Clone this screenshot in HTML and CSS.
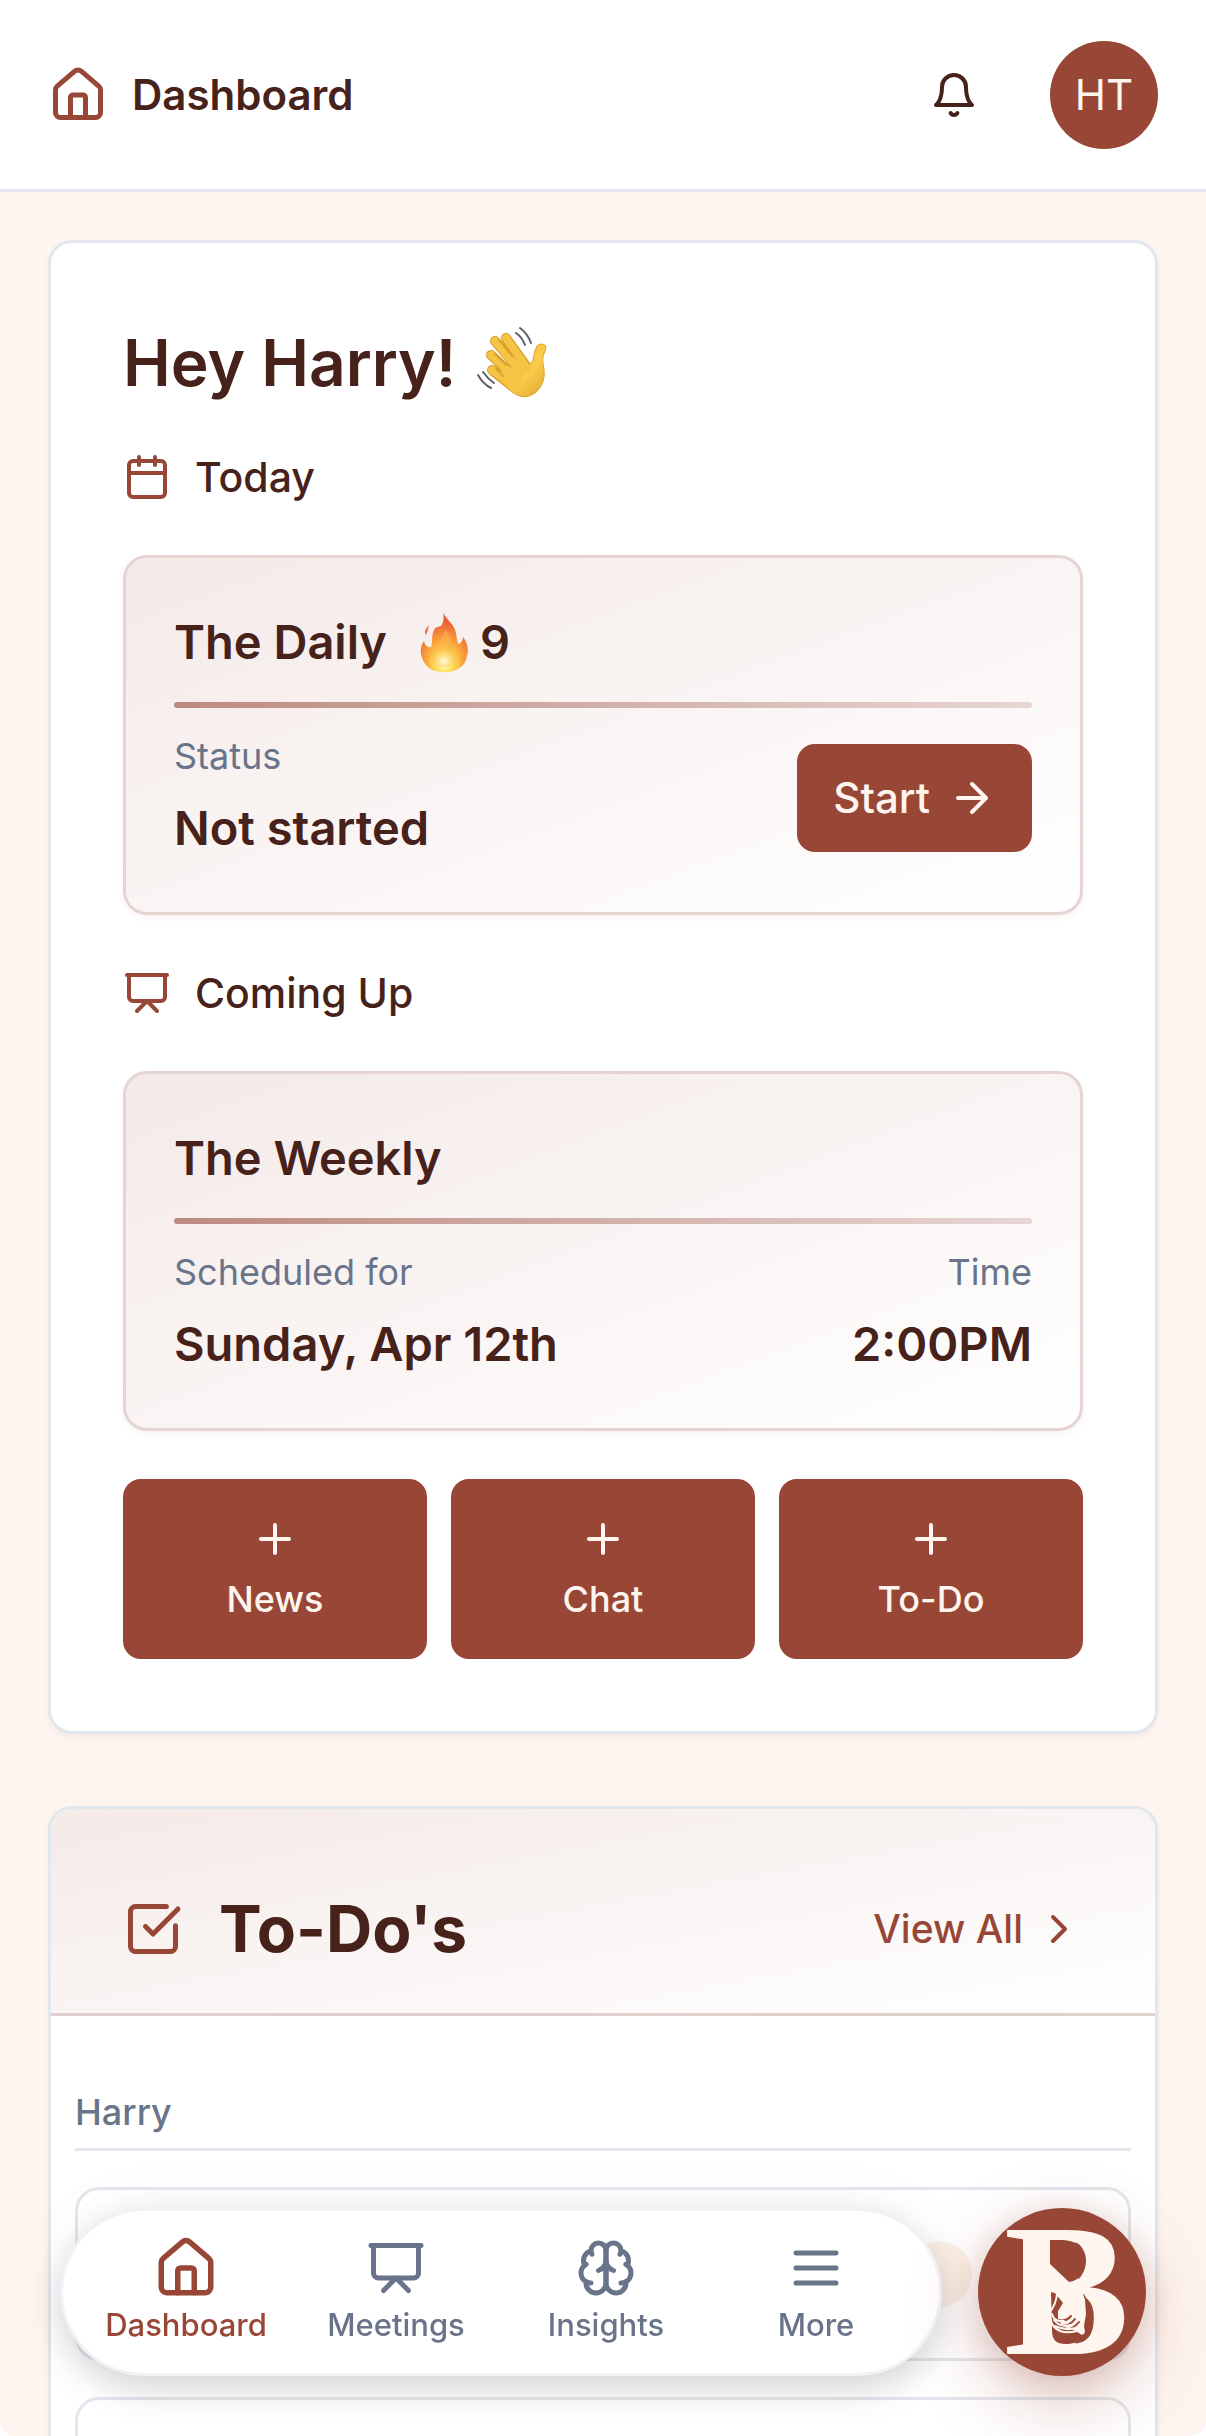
FILE: index.html
```html
<!DOCTYPE html>
<html lang="en">
  <head>
    <meta charset="utf-8" />
    <meta name="viewport" content="width=device-width" />
    <title>Dashboard</title>
    <link rel="stylesheet" href="styles.css">
  </head>
  <body>
    <!-- shared icon shapes -->
    <svg class="sprite" aria-hidden="true">
      <symbol id="i-home" viewBox="0 0 24 24">
        <path d="M15 21v-8a1 1 0 0 0-1-1h-4a1 1 0 0 0-1 1v8" />
        <path d="M3 10a2 2 0 0 1 .709-1.528l7-5.999a2 2 0 0 1 2.582 0l7 5.999A2 2 0 0 1 21 10v9a2 2 0 0 1-2 2H5a2 2 0 0 1-2-2z" />
      </symbol>
      <symbol id="i-bell" viewBox="0 0 24 24">
        <path d="M6 8a6 6 0 0 1 12 0c0 7 3 9 3 9H3s3-2 3-9" />
        <path d="M10.3 21a1.94 1.94 0 0 0 3.4 0" />
      </symbol>
      <symbol id="i-calendar" viewBox="0 0 24 24">
        <path d="M8 2v4M16 2v4M3 10h18" />
        <rect x="3" y="4" width="18" height="18" rx="2" />
      </symbol>
      <symbol id="i-board" viewBox="0 0 24 24">
        <path d="M2 3h20M21 3v11a2 2 0 0 1-2 2H5a2 2 0 0 1-2-2V3M7 21l5-5 5 5" />
      </symbol>
      <symbol id="i-arrow" viewBox="0 0 24 24">
        <path d="M5 12h14M12 5l7 7-7 7" />
      </symbol>
      <symbol id="i-plus" viewBox="0 0 24 24">
        <path d="M5 12h14M12 5v14" />
      </symbol>
      <symbol id="i-check" viewBox="0 0 24 24">
        <path d="M21 10.656V19a2 2 0 0 1-2 2H5a2 2 0 0 1-2-2V5a2 2 0 0 1 2-2h12.344" />
        <path d="m9 11 3 3L22 4" />
      </symbol>
      <symbol id="i-chevron" viewBox="0 0 24 24">
        <path d="m9 18 6-6-6-6" />
      </symbol>
      <symbol id="i-brain" viewBox="0 0 24 24">
        <path d="M12 5a3 3 0 1 0-5.997.125 4 4 0 0 0-2.526 5.77 4 4 0 0 0 .556 6.588A4 4 0 1 0 12 18Z" />
        <path d="M12 5a3 3 0 1 1 5.997.125 4 4 0 0 1 2.526 5.77 4 4 0 0 1-.556 6.588A4 4 0 1 1 12 18Z" />
        <path d="M15 13a4.5 4.5 0 0 1-3-4 4.5 4.5 0 0 1-3 4" />
        <path d="M17.599 6.5a3 3 0 0 0 .399-1.375M6.003 5.125A3 3 0 0 0 6.401 6.5M3.477 10.896a4 4 0 0 1 .585-.396M19.938 10.5a4 4 0 0 1 .585.396M6 18a4 4 0 0 1-1.967-.516M19.967 17.484A4 4 0 0 1 18 18" />
      </symbol>
      <symbol id="i-menu" viewBox="0 0 24 24">
        <path d="M4 6h16M4 12h16M4 18h16" />
      </symbol>
    </svg>

    <header class="topbar">
      <svg class="icon icon-lg accent"><use href="#i-home" /></svg>
      <span class="topbar-title">Dashboard</span>
      <button class="bell" aria-label="Notifications"><svg class="icon"><use href="#i-bell" /></svg></button>
      <button class="avatar">HT</button>
    </header>

    <main>
      <section class="card welcome">
        <h1>
          Hey Harry!
          <svg class="wave" viewBox="0 0 78 78" role="img" aria-label="waving hand">
            <defs>
              <linearGradient id="skin" x1="0" y1="0" x2="1" y2="1">
                <stop offset="0" stop-color="#f3b93c" />
                <stop offset=".6" stop-color="#f9cd4b" />
                <stop offset="1" stop-color="#e0a32e" />
              </linearGradient>
            </defs>
            <g stroke="#d99a2b" stroke-width="10" stroke-linecap="round">
              <path d="M32 14 52 42M21 17 47 47M17 31 42 54M18 46 38 62" />
            </g>
            <path fill="url(#skin)" stroke="#dfa12f" stroke-width="1" d="M32 44 49 40Q56 44 59 36Q60 27 63 22Q67 18 72 22Q72 26 69 32Q68 37 70 45Q72 60 61 69Q50 77 38 68L21 52Z" />
            <g stroke="#f6c445" stroke-width="8" stroke-linecap="round">
              <path d="M32 14 53 44M21 17 48 49M17 31 44 56M18 46 42 64" />
            </g>
            <g fill="none" stroke="#d99a2b" stroke-width="2" stroke-linecap="round">
              <path d="M25 16 38 32M21 30 32 41M22 45 29 52" opacity=".8" />
            </g>
            <g fill="none" stroke="#5c5f66" stroke-width="2" stroke-linecap="round">
              <path d="M42 9Q48 13 51 21M46 4Q54 10 57 19M4 51Q9 60 17 64M9 48Q14 55 20 59" />
            </g>
          </svg>
        </h1>

        <h2 class="section-label"><svg class="icon accent"><use href="#i-calendar" /></svg>Today</h2>
        <article class="meeting">
          <h3>
            The Daily
            <span class="streak">
              <svg class="fire" viewBox="0 0 54 66" role="img" aria-label="streak">
                <defs>
                  <radialGradient id="flame" cx=".5" cy=".85" r=".8">
                    <stop offset="0" stop-color="#fffbd0" />
                    <stop offset=".22" stop-color="#fde04e" />
                    <stop offset=".5" stop-color="#f9a13c" />
                    <stop offset=".8" stop-color="#ee6a37" />
                    <stop offset="1" stop-color="#e4502f" />
                  </radialGradient>
                  <radialGradient id="glow">
                    <stop offset="0" stop-color="#fffce0" />
                    <stop offset="1" stop-color="#fde65a" stop-opacity="0" />
                  </radialGradient>
                </defs>
                <path fill="url(#flame)" d="M26 3C28 10 37 14 39 24C40 30 40 33 42 35C44 34 46 31 46 28C50 33 52 40 50 47C49 53 46 56 45 57C39 62 33 63 27 63C18 63 12 60 9 56C5 51 3 44 4 39C5 35 6 33 7 32C8 37 11 39 14 38C16 34 14 27 17 21C19 17 22 18 24 17C27 13 27 8 26 3Z" />
                <path fill="#ef6b3c" d="M12 16Q11 22 9 26Q6 22 12 16Z" />
                <path fill="#fbb34a" opacity=".6" d="M28 20C34 27 35 35 35 42C39 44 40 47 39 52C36 60 18 60 15 52C13 46 18 44 20 38C22 31 28 29 28 20Z" />
                <ellipse cx="27" cy="52" rx="15" ry="13" fill="url(#glow)" />
              </svg>
              9
            </span>
          </h3>
          <hr>
          <div class="meeting-row">
            <dl>
              <dt>Status</dt>
              <dd>Not started</dd>
            </dl>
            <button class="start">Start<svg class="icon"><use href="#i-arrow" /></svg></button>
          </div>
        </article>

        <h2 class="section-label"><svg class="icon accent"><use href="#i-board" /></svg>Coming Up</h2>
        <article class="meeting">
          <h3>The Weekly</h3>
          <hr>
          <div class="meeting-row">
            <dl>
              <dt>Scheduled for</dt>
              <dd>Sunday, Apr 12th</dd>
            </dl>
            <dl class="right">
              <dt>Time</dt>
              <dd>2:00PM</dd>
            </dl>
          </div>
        </article>

        <div class="quick">
          <button><svg class="icon"><use href="#i-plus" /></svg>News</button>
          <button><svg class="icon"><use href="#i-plus" /></svg>Chat</button>
          <button><svg class="icon"><use href="#i-plus" /></svg>To-Do</button>
        </div>
      </section>

      <section class="card todos">
        <div class="todos-head">
          <svg class="icon icon-lg accent"><use href="#i-check" /></svg>
          <h2>To-Do's</h2>
          <a href="#todos">View All<svg class="icon"><use href="#i-chevron" /></svg></a>
        </div>
        <div class="todos-body">
          <h3>Harry</h3>
          <div class="todo"><span class="todo-badge"></span></div>
          <div class="todo"></div>
        </div>
      </section>
    </main>

    <div class="dock">
      <nav>
        <a class="active" href="#dashboard"><svg class="icon"><use href="#i-home" /></svg>Dashboard</a>
        <a href="#meetings"><svg class="icon"><use href="#i-board" /></svg>Meetings</a>
        <a href="#insights"><svg class="icon"><use href="#i-brain" /></svg>Insights</a>
        <a href="#more"><svg class="icon"><use href="#i-menu" /></svg>More</a>
      </nav>
      <button class="logo" aria-label="Assistant">
        <svg viewBox="0 0 168 168">
          <text x="26" y="146">B</text>
          <!-- counters, with the clasped hands in the lower one -->
          <path class="cream" d="M66 30H96L104 54 98 80 108 110 96 138H66Z" />
          <path class="brown" d="M72 32H82C98 32 108 39 108 53C108 64 101 73 91 74L72 56Z" />
          <path class="brown" d="M73 84 80 86H106C110 92 112 102 112 110C112 126 103 136 88 136C78 136 74 132 74 122Z" />
          <path class="cream" d="M72 57 91 75 104 82 107 92 108 106 106 118 107 124Q105 129 101 125L95 122 84 118 80 110 80 103 85 95 77 85 69 79Z" />
          <path class="seam" d="M81 112Q88 114 93 108M80 117Q90 120 97 111M83 122Q94 123 101 114" />
          <path class="line" d="M79 86Q78 96 72 104Q71 112 76 119Q84 127 99 123M74 106Q76 114 86 113M76 112Q82 120 93 117M77 118Q87 123 98 120" />
        </svg>
      </button>
    </div>
  </body>
</html>
```
FILE: styles.css
```css
:root {
  --primary: #984736;
  --ink: #47221b;
  --muted: #69748a;
  --cream: #fff5ef;
  --line: #e2e7ed;
  --blush: #e5d4d2;
}

* {
  box-sizing: border-box;
}

html, body {
  height: 100%;
  margin: 0;
}

html {
  background-color: #ffffff;
}

body {
  display: flex;
  flex-direction: column;
  overflow: hidden;
  border-radius: 0 0 16px 16px;
  background-color: #fef5f0;
  color: var(--ink);
  font-family: Inter, "Liberation Sans", Arial, sans-serif;
  font-size: 42px;
  line-height: 60px;
}

h1, h2, h3, dl, dd {
  margin: 0;
}

button {
  border: 0;
  padding: 0;
  font: inherit;
  color: var(--cream);
  background-color: var(--primary);
  cursor: pointer;
}

a {
  color: inherit;
  text-decoration: none;
}

.sprite {
  position: absolute;
  width: 0;
  height: 0;
}

.icon {
  width: 48px;
  height: 48px;
  flex: none;
  fill: none;
  stroke: currentColor;
  stroke-width: 2;
  stroke-linecap: round;
  stroke-linejoin: round;
}

.icon-lg {
  width: 60px;
  height: 60px;
}

.accent {
  color: var(--primary);
}

/* top bar */

.topbar {
  flex: none;
  display: flex;
  align-items: center;
  height: 192px;
  padding: 0 48px;
  background-color: #ffffff;
  border-bottom: 3px solid var(--line);
}

.topbar-title {
  flex: 1;
  margin-left: 24px;
  font-weight: 600;
}

.bell {
  display: flex;
  margin-right: 72px;
  color: var(--ink);
  background: none;
}

.avatar {
  width: 108px;
  height: 108px;
  border-radius: 50%;
}

/* cards */

main {
  flex: 1;
  min-height: 0;
  overflow-y: auto;
  scrollbar-width: none;
  padding: 48px;
}

.card {
  background-color: #ffffff;
  border: 3px solid var(--line);
  border-radius: 24px;
  box-shadow: 0 3px 6px rgba(0, 0, 0, 0.05);
}

.welcome {
  display: flex;
  flex-direction: column;
  gap: 48px;
  padding: 72px;
  margin-bottom: 72px;
}

h1 {
  display: flex;
  align-items: center;
  gap: 18px;
  margin-bottom: -12px;
  font-size: 64px;
  font-weight: 600;
  line-height: 96px;
}

.wave {
  width: 78px;
  height: 78px;
}

.section-label {
  display: flex;
  align-items: center;
  gap: 24px;
  font-size: 41px;
  font-weight: 500;
}

.meeting {
  padding: 48px;
  border: 3px solid var(--blush);
  border-radius: 24px;
  background: linear-gradient(to bottom right, #f4eae8, #ffffff);
  background-clip: padding-box;
  box-shadow: 0 3px 6px rgba(152, 71, 54, 0.06);
}

.meeting h3 {
  display: flex;
  align-items: center;
  gap: 30px;
  font-size: 47px;
  font-weight: 600;
  line-height: 72px;
}

.streak {
  display: flex;
  align-items: center;
  gap: 9px;
}

.fire {
  width: 54px;
  height: 66px;
}

hr {
  height: 6px;
  margin: 24px 0;
  border: 0;
  border-radius: 3px;
  background: linear-gradient(to right, #bd8a80, #e7d6d4);
}

.meeting-row {
  display: flex;
  align-items: center;
  justify-content: space-between;
}

dt {
  margin-bottom: 12px;
  font-size: 36px;
  line-height: 48px;
  color: var(--muted);
}

dd {
  font-size: 47px;
  font-weight: 600;
  line-height: 72px;
}

.right {
  text-align: right;
}

.start {
  display: flex;
  align-items: center;
  gap: 18px;
  height: 108px;
  padding: 0 36px;
  border-radius: 18px;
  font-weight: 500;
}

.quick {
  display: flex;
  gap: 24px;
}

.quick button {
  flex: 1;
  display: flex;
  flex-direction: column;
  align-items: center;
  justify-content: center;
  gap: 12px;
  height: 180px;
  border-radius: 18px;
  font-size: 36px;
  font-weight: 500;
  line-height: 48px;
}

/* to-do list */

.todos {
  overflow: hidden;
}

.todos-head {
  display: flex;
  align-items: center;
  padding: 72px 72px 36px;
  border-bottom: 3px solid #e0cfcd;
  background: linear-gradient(to bottom right, #f4eae8, #ffffff);
}

.todos-head h2 {
  flex: 1;
  margin-left: 36px;
  font-size: 64px;
  font-weight: 700;
  line-height: 96px;
}

.todos-head a {
  display: flex;
  align-items: center;
  gap: 12px;
  font-size: 39px;
  font-weight: 500;
  color: var(--primary);
}

.todos-body {
  padding: 72px 24px 36px;
}

.todos-body h3 {
  padding-bottom: 12px;
  border-bottom: 3px solid var(--line);
  font-size: 36px;
  font-weight: 500;
  line-height: 48px;
  color: var(--muted);
}

.todo {
  display: flex;
  align-items: center;
  justify-content: flex-end;
  height: 174px;
  margin-top: 36px;
  padding-right: 156px;
  border: 3px solid var(--line);
  border-radius: 24px;
}

.todo-badge {
  width: 66px;
  height: 66px;
  border-radius: 50%;
  background-color: #fbf1e8;
}

/* floating navigation */

.dock {
  position: fixed;
  left: 60px;
  right: 60px;
  bottom: 60px;
  display: flex;
  gap: 36px;
}

nav {
  flex: 1;
  display: flex;
  align-items: center;
  height: 168px;
  padding: 0 18px;
  border: 3px solid #f1f2f5;
  border-radius: 84px;
  background-color: #ffffff;
  box-shadow: 0 12px 36px rgba(0, 0, 0, 0.16), 0 0 72px rgba(0, 0, 0, 0.04);
}

nav a {
  flex: 1 1 0;
  display: flex;
  flex-direction: column;
  align-items: center;
  gap: 6px;
  font-size: 31px;
  font-weight: 500;
  line-height: 42px;
  color: var(--muted);
}

nav .icon {
  width: 60px;
  height: 60px;
}

nav .active {
  color: var(--primary);
}

nav .active .icon {
  transform: scale(1.1);
}

.logo {
  width: 168px;
  height: 168px;
  border-radius: 50%;
  box-shadow: 0 24px 72px rgba(152, 71, 54, 0.3), 0 6px 30px rgba(152, 71, 54, 0.18);
}

.logo svg {
  display: block;
  overflow: visible;
}

.logo text {
  font-family: "Liberation Serif", serif;
  font-size: 188px;
  font-weight: 700;
  fill: var(--cream);
}

.cream {
  fill: var(--cream);
}

.brown {
  fill: var(--primary);
}

.line, .seam {
  fill: none;
  stroke: var(--cream);
  stroke-width: 2;
  stroke-linecap: round;
}

.seam {
  stroke: var(--primary);
}
```
